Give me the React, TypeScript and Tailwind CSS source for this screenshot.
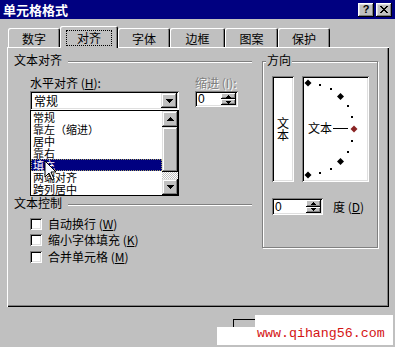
import React from "react";

function DownTri({ w = 7 }: { w?: number }) {
  const h = Math.ceil(w / 2);
  return (
    <svg width={w} height={h} viewBox={`0 0 ${w} ${h}`} shapeRendering="crispEdges">
      <polygon points={`0,0 ${w},0 ${w / 2},${h}`} fill="#000" />
    </svg>
  );
}
function UpTri({ w = 7 }: { w?: number }) {
  const h = Math.ceil(w / 2);
  return (
    <svg width={w} height={h} viewBox={`0 0 ${w} ${h}`} shapeRendering="crispEdges">
      <polygon points={`0,${h} ${w},${h} ${w / 2},0`} fill="#000" />
    </svg>
  );
}

function GroupHeader({ label }: { label: string }) {
  return (
    <div className="flex h-[12px] items-center">
      <span className="whitespace-nowrap">{label}</span>
      <div className="ml-[6px] mt-[3px] h-[2px] flex-1 border-t border-b border-t-[#808080] border-b-white" />
    </div>
  );
}

function Spin({ w, h }: { w: number; h: number }) {
  return (
    <div
      className="flex items-stretch bg-white p-[2px] shadow-[inset_1px_1px_0_#808080,inset_-1px_-1px_0_#fff,inset_2px_2px_0_#000,inset_-2px_-2px_0_#dfdfdf]"
      style={{ width: w, height: h }}
    >
      <span className="flex-1 self-center pl-[1px] font-['Liberation_Sans',sans-serif] text-[12px] leading-[12px]">0</span>
      <div className="flex w-[15px] flex-col">
        <div className="flex flex-1 items-center justify-center bg-[#c0c0c0] shadow-[inset_-1px_-1px_0_#000,inset_1px_1px_0_#fff,inset_-2px_-2px_0_#808080]">
          <UpTri w={5} />
        </div>
        <div className="flex flex-1 items-center justify-center bg-[#c0c0c0] shadow-[inset_-1px_-1px_0_#000,inset_1px_1px_0_#fff,inset_-2px_-2px_0_#808080]">
          <DownTri w={5} />
        </div>
      </div>
    </div>
  );
}

function Check({ label, k }: { label: string; k: string }) {
  return (
    <div className="flex h-[12px] items-center">
      <div className="h-[12px] w-[12px] bg-white shadow-[inset_1px_1px_0_#808080,inset_-1px_-1px_0_#fff,inset_2px_2px_0_#000,inset_-2px_-2px_0_#dfdfdf]" />
      <span className="ml-[6px] whitespace-nowrap">
        {label} (<span className="underline">{k}</span>)
      </span>
    </div>
  );
}

function Orientation() {
  const cx = 6;
  const cy = 53;
  const r = 46;
  const pts = (deg: number) => {
    const a = (deg * Math.PI) / 180;
    return [cx + r * Math.sin(a), cy - r * Math.cos(a)];
  };
  const diamonds = [0, 45, 90, 135, 180];
  const dots = [15, 30, 60, 75, 105, 120, 150, 165];
  return (
    <svg width="67" height="106" viewBox="0 0 67 106" className="block">
      {dots.map((d) => {
        const [x, y] = pts(d);
        return <rect key={d} x={Math.round(x) - 1} y={Math.round(y) - 1} width="2" height="2" fill="#000" />;
      })}
      {diamonds.map((d) => {
        const [x, y] = pts(d);
        const s = 3.5;
        return (
          <polygon
            key={d}
            points={`${x},${y - s} ${x + s},${y} ${x},${y + s} ${x - s},${y}`}
            fill={d === 90 ? "#8a2424" : "#000"}
          />
        );
      })}
      <text x="6" y="57" fontSize="12" fontFamily="Noto Sans CJK SC, sans-serif" fill="#000">
        文本
      </text>
      <line x1="31" y1="52.5" x2="46" y2="52.5" stroke="#000" strokeWidth="1" />
    </svg>
  );
}

const items = ["常规", "靠左（缩进）", "居中", "靠右", "填充", "两端对齐", "跨列居中"];

export default function App() {
  return (
    <div className="relative h-[347px] w-[395px] overflow-hidden bg-[#c0c0c0] font-['Noto_Sans_CJK_SC','Liberation_Sans',sans-serif] text-[12px] leading-[12px] text-black">
      {/* title bar */}
      <div className="flex h-[19px] items-center bg-[#000080] pl-[3px] pr-[3px]">
        <span className="text-[13px] font-bold leading-[13px] text-white">单元格格式</span>
        <div className="ml-auto flex gap-[2px]">
          <div className="flex h-[14px] w-[16px] items-center justify-center bg-[#c0c0c0] shadow-[inset_-1px_-1px_0_#000,inset_1px_1px_0_#fff,inset_-2px_-2px_0_#808080,inset_2px_2px_0_#dfdfdf]">
            <span className="font-['Liberation_Sans',sans-serif] text-[11px] font-bold leading-none">?</span>
          </div>
          <div className="flex h-[14px] w-[16px] items-center justify-center bg-[#c0c0c0] shadow-[inset_-1px_-1px_0_#000,inset_1px_1px_0_#fff,inset_-2px_-2px_0_#808080,inset_2px_2px_0_#dfdfdf]">
            <svg width="8" height="7" viewBox="0 0 8 7" shapeRendering="crispEdges">
              <path d="M0 0h2v1h-2zM6 0h2v1h-2zM1 1h2v1h-2zM5 1h2v1h-2zM2 2h4v1h-4zM3 3h2v1h-2zM2 4h4v1h-4zM1 5h2v1h-2zM5 5h2v1h-2zM0 6h2v1h-2zM6 6h2v1h-2z" fill="#000" />
            </svg>
          </div>
        </div>
      </div>

      {/* tabs */}
      <div className="relative z-10 ml-[8px] mt-[7px] flex h-[21px] items-end">
        {[
          { l: "数字", w: 52 },
          { l: "对齐", w: 58, s: true },
          { l: "字体", w: 52 },
          { l: "边框", w: 55 },
          { l: "图案", w: 53 },
          { l: "保护", w: 52 },
        ].map((t) =>
          t.s ? (
            <div
              key={t.l}
              className="-mb-[1px] flex h-[22px] items-start justify-center rounded-t-[2px] bg-[#c0c0c0] pt-[4px] shadow-[inset_1px_1px_0_#fff,inset_-1px_0_0_#000,inset_-2px_0_0_#808080]"
              style={{ width: t.w }}
            >
              <span className="border border-dotted border-black px-[10px] py-[1px]">{t.l}</span>
            </div>
          ) : (
            <div
              key={t.l}
              className="flex h-[19px] items-start justify-center rounded-t-[2px] bg-[#c0c0c0] pt-[5px] shadow-[inset_1px_1px_0_#fff,inset_-1px_0_0_#000,inset_-2px_0_0_#808080]"
              style={{ width: t.w }}
            >
              <span>{t.l}</span>
            </div>
          )
        )}
      </div>

      {/* panel */}
      <div className="relative ml-[7px] flex h-[260px] w-[382px] pl-[7px] pt-[7px] shadow-[inset_1px_1px_0_#fff,inset_-1px_-1px_0_#000,inset_-2px_-2px_0_#808080]">
        {/* left column */}
        <div className="flex w-[238px] flex-col">
          <GroupHeader label="文本对齐" />
          <div className="mt-[11px] flex">
            <div className="relative ml-[16px] w-[149px]">
              <div className="h-[12px] whitespace-nowrap">
                水平对齐 (<span className="underline">H</span>):
              </div>
              <div className="mt-[2px] flex h-[19px] items-center bg-white p-[2px] shadow-[inset_1px_1px_0_#808080,inset_-1px_-1px_0_#fff,inset_2px_2px_0_#000,inset_-2px_-2px_0_#dfdfdf]">
                <span className="flex-1 pl-[2px]">常规</span>
                <div className="flex h-[15px] w-[16px] items-center justify-center bg-[#c0c0c0] shadow-[inset_-1px_-1px_0_#000,inset_1px_1px_0_#dfdfdf,inset_-2px_-2px_0_#808080,inset_2px_2px_0_#fff]">
                  <DownTri />
                </div>
              </div>
              {/* open list */}
              <div className="absolute left-0 top-[33px] z-20 flex h-[86px] w-[149px] border border-black bg-white">
                <div className="flex-1">
                  {items.map((it) =>
                    it === "填充" ? (
                      <div key={it} className="flex h-[12px] items-center bg-[#000080] pl-[2px] text-[11px] leading-[11px] text-white outline outline-1 -outline-offset-1 outline-dotted outline-[#a0a060]">
                        {it}
                      </div>
                    ) : (
                      <div key={it} className="flex h-[12px] items-center whitespace-nowrap pl-[2px] text-[11px] leading-[11px]">
                        {it}
                      </div>
                    )
                  )}
                </div>
                <div className="flex w-[16px] flex-col">
                  <div className="flex h-[16px] items-center justify-center bg-[#c0c0c0] shadow-[inset_-1px_-1px_0_#000,inset_1px_1px_0_#dfdfdf,inset_-2px_-2px_0_#808080,inset_2px_2px_0_#fff]">
                    <UpTri />
                  </div>
                  <div className="h-[45px] bg-[#c0c0c0] shadow-[inset_-1px_-1px_0_#000,inset_1px_1px_0_#dfdfdf,inset_-2px_-2px_0_#808080,inset_2px_2px_0_#fff]" />
                  <div className="flex-1 bg-[repeating-conic-gradient(#fff_0_25%,#c0c0c0_0_50%)] bg-[length:2px_2px]" />
                  <div className="flex h-[16px] items-center justify-center bg-[#c0c0c0] shadow-[inset_-1px_-1px_0_#000,inset_1px_1px_0_#dfdfdf,inset_-2px_-2px_0_#808080,inset_2px_2px_0_#fff]">
                    <DownTri />
                  </div>
                </div>
              </div>
            </div>
            <div className="ml-[16px]">
              <div className="h-[12px] whitespace-nowrap text-[#808080] [text-shadow:1px_1px_0_#fff]">缩进 (I):</div>
              <div className="mt-[2px]">
                <Spin w={43} h={16} />
              </div>
            </div>
          </div>

          <div className="mt-[87px]">
            <GroupHeader label="文本控制" />
          </div>
          <div className="ml-[16px] mt-[9px] flex flex-col">
            <Check label="自动换行" k="W" />
            <div className="mt-[4px]">
              <Check label="缩小字体填充" k="K" />
            </div>
            <div className="mt-[5px]">
              <Check label="合并单元格" k="M" />
            </div>
          </div>
        </div>

        {/* right column: 方向 */}
        <div className="ml-[10px] mt-[7px]">
          <div className="relative h-[187px] w-[116px] border border-[#808080] pl-[9px] pt-[14px] shadow-[inset_1px_1px_0_#fff,1px_1px_0_#fff]">
            <span className="absolute left-[3px] top-[-8px] bg-[#c0c0c0] px-[1px]">方向</span>
            <div className="flex gap-[8px]">
              <div className="flex h-[106px] w-[22px] flex-col items-center justify-center bg-white shadow-[inset_1px_1px_0_#808080,inset_-1px_-1px_0_#fff,inset_2px_2px_0_#000,inset_-2px_-2px_0_#dfdfdf]">
                <span className="leading-[12px]">文</span>
                <span className="leading-[12px]">本</span>
              </div>
              <div className="h-[106px] w-[67px] bg-white shadow-[inset_1px_1px_0_#808080,inset_-1px_-1px_0_#fff,inset_2px_2px_0_#000,inset_-2px_-2px_0_#dfdfdf]">
                <Orientation />
              </div>
            </div>
            <div className="mt-[16px] flex items-center">
              <Spin w={51} h={17} />
              <span className="ml-[10px] whitespace-nowrap">
                度 (<span className="underline">D</span>)
              </span>
            </div>
          </div>
        </div>
      </div>

      {/* mouse cursor */}
      <svg className="absolute left-[44px] top-[160px] z-30" width="14" height="22" viewBox="0 0 14 22">
        <path d="M1 1 L1 17 L5 13 L8 20 L10 19 L7 12 L12 12 Z" fill="#f4f8ff" stroke="#000" strokeWidth="1" strokeLinejoin="miter" />
      </svg>

      {/* partially covered button + watermark */}
      <div className="absolute left-[233px] top-[319px] h-[24px] w-[40px] border-l border-t border-black" />
      <div className="absolute left-[217px] top-[327px] h-[18px] w-[40px] bg-white" />
      <div className="absolute left-[255px] top-[315px] flex h-[30px] w-[138px] items-end bg-white pb-[4px] pl-[2px]">
        <span className="font-['Liberation_Mono',monospace] text-[13.3px] leading-[14px] text-[#d41414]">www.qihang56.com</span>
      </div>
    </div>
  );
}
